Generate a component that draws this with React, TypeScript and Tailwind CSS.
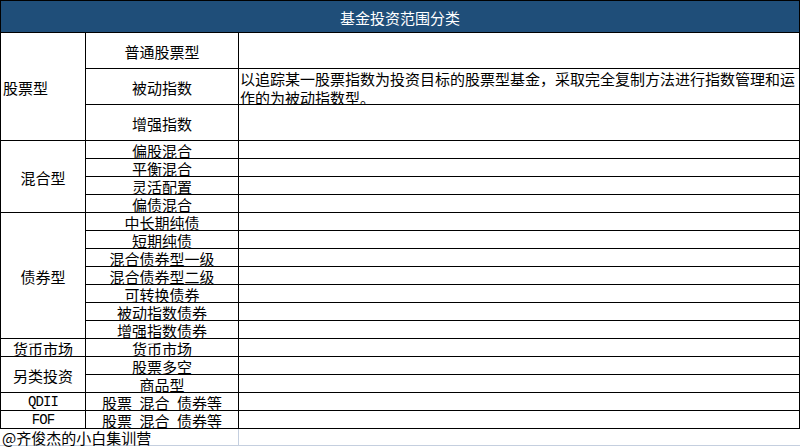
import React from 'react';

// 基金投资范围分类 - spreadsheet style classification table

type Group = {
  label: string;
  items: string[];
  tall?: boolean;
  left?: boolean;
  mono?: boolean;
};

const groups: Group[] = [
  { label: '股票型', items: ['普通股票型', '被动指数', '增强指数'], tall: true, left: true },
  { label: '混合型', items: ['偏股混合', '平衡混合', '灵活配置', '偏债混合'] },
  {
    label: '债券型',
    items: ['中长期纯债', '短期纯债', '混合债券型一级', '混合债券型二级', '可转换债券', '被动指数债券', '增强指数债券'],
  },
  { label: '货币市场', items: ['货币市场'] },
  { label: '另类投资', items: ['股票多空', '商品型'] },
  { label: 'QDII', items: ['股票\u2002混合\u2002债券等'], mono: true },
  { label: 'FOF', items: ['股票\u2002混合\u2002债券等'], mono: true },
];

function Description({ item }: { item: string }) {
  if (item !== '被动指数') return null;
  return (
    <div className="pl-px leading-[19px] whitespace-nowrap">
      以追踪某一股票指数为投资目标的股票型基金，采取完全复制方法进行指数管理和运
      <br />
      作的为被动指数型。
    </div>
  );
}

export default function App() {
  return (
    <div className="w-[800px] h-[447px] bg-white text-black text-[15px] font-['Noto_Sans_CJK_SC',sans-serif] overflow-hidden">
      {/* bordered table */}
      <div className="flex flex-col gap-px bg-black p-px">
        {/* Title bar */}
        <div className="h-[31px] bg-[#1f4e79] text-white flex items-center justify-center leading-none pt-px">
          基金投资范围分类
        </div>

        {groups.map((g) => (
          <div key={g.label} className="flex gap-px">
            <div
              className={`w-[84px] shrink-0 bg-white flex items-center leading-none pt-px ${
                g.left ? 'justify-start pl-[2px]' : 'justify-center'
              } ${g.mono ? "font-['Liberation_Mono',monospace] text-[14px] tracking-[-0.9px]" : ''}`}
            >
              {g.label}
            </div>
            <div className="flex-1 flex flex-col gap-px">
              {g.items.map((item, i) => (
                <div key={i} className={`flex gap-px ${g.tall ? 'h-[35px]' : 'h-[17px]'}`}>
                  <div className="w-[152px] shrink-0 bg-white flex items-center justify-center leading-none pt-px whitespace-pre">
                    {item}
                  </div>
                  <div className="flex-1 bg-white">{g.tall && <Description item={item} />}</div>
                </div>
              ))}
            </div>
          </div>
        ))}
      </div>

      {/* Footer watermark row with light gridlines */}
      <div className="grid grid-cols-[239px_1fr] h-[17px] border-b border-[#c5cfdf]">
        <div className="border-r border-[#c5cfdf] pl-[2px] leading-none pt-px">@齐俊杰的小白集训营</div>
        <div />
      </div>
    </div>
  );
}
